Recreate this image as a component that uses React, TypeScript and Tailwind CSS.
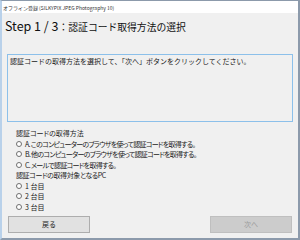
const jp = "font-['Noto_Sans_CJK_JP','Noto_Sans',sans-serif]";

function Radio({ label, tight }: { label: string; tight?: boolean }) {
  return (
    <div className="flex items-center h-[10.5px] gap-[3px]">
      <span className="w-[6px] h-[6px] rounded-full border border-[#707070] bg-white shrink-0" />
      <span className={tight ? "tracking-[-0.7px] whitespace-nowrap" : "whitespace-nowrap"}>{label}</span>
    </div>
  );
}

export default function App() {
  return (
    <div className={`w-[300px] h-[240px] bg-[#f0f0f0] border-l-[2px] border-l-[#b9d1ea] border-r-[2px] border-r-[#8c9aab] border-t border-t-[#8c9aab] border-b-[2px] border-b-[#8c9aab] flex flex-col text-[#1a1a1a] ${jp}`}>
      {/* Title bar */}
      <div className="h-[12px] bg-white flex items-center pl-[1px] text-[5px] text-[#333] leading-none">
        オフライン登録 (SILKYPIX JPEG Photography 10)
      </div>

      {/* Heading */}
      <div className="h-[24px] flex items-center pl-[3px] text-[#111] whitespace-nowrap">
        <div className="leading-[14px]">
          <span className="text-[12.5px]">Step 1 / 3</span>
          <span className="text-[9.8px]">：認証コード取得方法の選択</span>
        </div>
      </div>

      <div className="flex flex-col px-[5px] pt-[17px]">
        {/* Message box */}
        <div className="h-[68px] border border-[#8cc0ea] px-[2px] pt-[1px] text-[7px] leading-[10px]">
          認証コードの取得方法を選択して、「次へ」ボタンをクリックしてください。
        </div>

        <div className="pl-[9px] pt-[6px] text-[7px] leading-[10px] flex flex-col [font-feature-settings:'palt']">
          <div className="h-[10.5px]">認証コードの取得方法</div>
          <Radio tight label="A. このコンピューターのブラウザを使って認証コードを取得する。" />
          <Radio tight label="B. 他のコンピューターのブラウザを使って認証コードを取得する。" />
          <Radio tight label="C. メールで認証コードを取得する。" />
          <div className="h-[10.5px] tracking-[-0.4px]">認証コードの取得対象となるPC</div>
          <Radio label="1 台目" />
          <Radio label="2 台目" />
          <Radio label="3 台目" />
        </div>

        <div className="flex justify-between pl-[1px] pr-[1px] mt-[4px]">
          <button className="w-[82px] h-[17px] bg-[#e1e1e1] border border-[#adadad] text-[7px] leading-none text-[#222]">
            戻る
          </button>
          <button className="w-[82px] h-[17px] bg-[#cccccc] border border-[#bfbfbf] text-[7px] leading-none text-[#9a9a9a]">
            次へ
          </button>
        </div>
      </div>
    </div>
  );
}
